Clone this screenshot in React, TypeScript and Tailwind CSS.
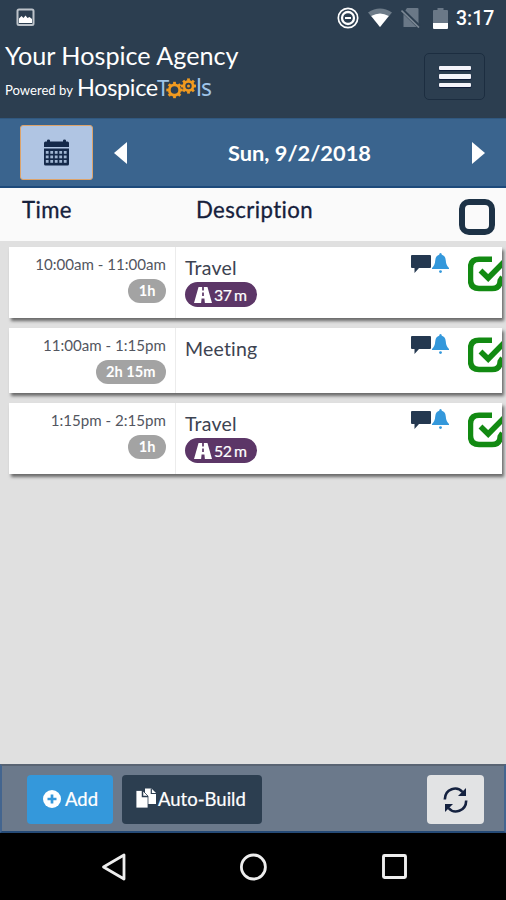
import type { ReactNode } from 'react'

interface Visit {
  time: string
  duration: string
  title: string
  drive?: string
}

const VISITS: Visit[] = [
  { time: '10:00am - 11:00am', duration: '1h', title: 'Travel', drive: '37 m' },
  { time: '11:00am - 1:15pm', duration: '2h 15m', title: 'Meeting' },
  { time: '1:15pm - 2:15pm', duration: '1h', title: 'Travel', drive: '52 m' },
]

function StatusBar() {
  return (
    <div className="flex h-9 items-center pl-4 pr-[10px]">
      <svg className="mt-[-1px]" width="20" height="19" viewBox="0 0 20 19">
        <rect x="1.500" y="1.500" width="16" height="15.500" rx="1.500" fill="none" stroke="#bdc3ca" strokeWidth="2" />
        <path d="M3 15v-4.500l2.500-2.500 2 2 2-2.500 2 2.500 2-1 2.500 2v4z" fill="#fff" />
      </svg>
      <div className="ml-auto flex items-center">
        <svg width="22" height="22" viewBox="0 0 22 22">
          <circle cx="11" cy="11" r="9.700" fill="none" stroke="#fff" strokeWidth="1.700" />
          <circle cx="11" cy="11" r="6" fill="none" stroke="#fff" strokeWidth="2.300" />
          <path d="M8 11h6" stroke="#fff" strokeWidth="2" />
        </svg>
        <svg className="ml-[9px]" width="24" height="20" viewBox="0 0 24 20">
          <path d="M0 4.500Q12-3.500 24 4.500L12 19z" fill="#6d7b88" />
          <path d="M3.200 8Q12 3 20.800 8L12 19z" fill="#fff" />
        </svg>
        <svg className="ml-[9px]" width="20" height="20" viewBox="0 0 20 20">
          <path d="M6 0h10.500q1 0 1 1v18h-15V5z" fill="#6a7887" />
          <path d="M0 1l19 18.500" stroke="#2c3e50" strokeWidth="4" />
          <path d="M.5 2.500l17.500 17" stroke="#7c8894" strokeWidth="1.700" />
        </svg>
        <svg className="ml-[12px]" width="15" height="21" viewBox="0 0 15 21">
          <path d="M4.500 0h6v2H14q1 0 1 1v12H0V3q0-1 1-1h3.500z" fill="#6a7887" />
          <path d="M0 15h15v5q0 1-1 1H1q-1 0-1-1z" fill="#fff" />
        </svg>
        <span className="ml-[8px] mt-[2px] w-[40px] whitespace-nowrap font-['Roboto'] text-[19.500px] font-medium leading-none text-white">3:17</span>
      </div>
    </div>
  )
}

function Gear({ x, y, r }: { x: number; y: number; r: number }) {
  return (
    <g transform={`translate(${x} ${y})`} fill="none" stroke="#f19a1f">
      <circle r={r - 2.2} strokeWidth="2.800" />
      {[0, 45, 90, 135, 180, 225, 270, 315].map((a) => (
        <path key={a} d={`M0 ${-(r - 1.5)}V${-(r + 0.8)}`} strokeWidth="2.800" transform={`rotate(${a})`} />
      ))}
    </g>
  )
}

function Logo() {
  return (
    <div className="flex h-[30px] items-start text-[24px] leading-[30px]">
      <span className="w-[80px] whitespace-nowrap text-[23.500px] tracking-[-0.35px]">Hospice</span>
      <span className="w-[9px] font-['Noto_Sans'] text-[22px] tracking-[-3px] text-[#9fc4e8]">T</span>
      <svg width="30" height="28" viewBox="166 73 30 28">
        <Gear x={174.5} y={91} r={7.4} />
        <Gear x={188.5} y={87} r={6.8} />
        <circle cx="188.500" cy="87" r="1.500" fill="#f19a1f" />
      </svg>
      <span className="font-['Noto_Sans'] text-[23px] tracking-[-1px] text-[#9fc4e8]">ls</span>
    </div>
  )
}

function AppHeader() {
  return (
    <header className="h-[118px] bg-[#2c3e50] text-white">
      <StatusBar />
      <div className="flex justify-between pl-[5px] pr-[21px]">
        <div>
          <h1 className="mt-[4px] whitespace-nowrap text-[25.200px] leading-[30px]">Your Hospice Agency</h1>
          <div className="mt-[2px] flex">
            <span className="w-[72px] whitespace-nowrap pt-[8px] text-[13.100px] leading-[20px]">Powered by</span>
            <Logo />
          </div>
        </div>
        <button className="mt-[17px] flex h-[47px] w-[61px] flex-col items-center justify-center gap-[4px] rounded-[5px] border border-[#1c2d40]">
          {[0, 1, 2].map((i) => (
            <span key={i} className="h-[4.500px] w-[32px] rounded-[1px] bg-[#f4f4fa] shadow-[0_1px_1px_#0c1836]" />
          ))}
        </button>
      </div>
    </header>
  )
}

function CalendarIcon() {
  const cols = [2.5, 7, 11.5, 16, 20.5]
  return (
    <svg width="25" height="27" viewBox="0 0 25 27">
      <path d="M0 8V4q0-1.500 1.500-1.500H3V1.500Q3 .5 4.500.5T6 1.500v1h13v-1Q19 .5 20.500.5T22 1.500v1h1.500Q25 2.500 25 4v4zM0 9.500h25V25q0 1.500-1.500 1.500h-22Q0 26.500 0 25z" fill="#14294a" />
      {[12, 16.5, 21].map((y) =>
        cols.map((x) => <rect key={`${x}-${y}`} x={x - 0.7} y={y} width="2.800" height="2.800" fill="#9fb5d2" />)
      )}
    </svg>
  )
}

function DateBar() {
  return (
    <div className="flex h-[70px] items-center border-b-2 border-t border-b-[#1d4a7b] border-t-[#305880] bg-[#3a648e] pl-[20px] pr-[21px]">
      <button className="flex h-[55px] w-[73px] items-center justify-center rounded-[3px] border-[1.500px] border-[#dda36a] bg-[#b0c5e3]">
        <CalendarIcon />
      </button>
      <svg className="ml-[21px]" width="13" height="22" viewBox="0 0 13 22">
        <path d="M13 0v22L0 11z" fill="#fff" />
      </svg>
      <span className="ml-[101px] whitespace-nowrap text-[21.800px] font-bold leading-none text-white">Sun, 9/2/2018</span>
      <svg className="ml-auto" width="13" height="22" viewBox="0 0 13 22">
        <path d="M0 0v22L13 11z" fill="#fff" />
      </svg>
    </div>
  )
}

function ColumnHeader() {
  return (
    <div className="flex h-[53px] bg-[#fafafa] pl-[22px] pr-[11px] text-[22.200px] leading-[26px] tracking-[0.4px] text-[#16213c] [-webkit-text-stroke:0.3px_#16213c]">
      <span className="mt-[9px] w-[174px]">Time</span>
      <span className="mt-[9px]">Description</span>
      <span className="ml-auto mt-[11px] size-[36px] rounded-[10px] border-[6px] border-[#1d3246]" />
    </div>
  )
}

function Pill({ className, children }: { className: string; children: ReactNode }) {
  return <span className={`flex items-center whitespace-nowrap rounded-full text-white ${className}`}>{children}</span>
}

function RoadIcon() {
  return (
    <svg width="18" height="16" viewBox="0 0 19 16" preserveAspectRatio="none">
      <path d="M4.800 0h9.400L19 16h-7.500l-.5-4.500H8L7.500 16H0z" fill="#fff" />
      <path d="M9.500 0v3.500M9.500 5.500v3.500" stroke="#5c3667" strokeWidth="1.800" />
    </svg>
  )
}

function VisitActions() {
  return (
    <div className="ml-auto flex">
      <svg className="mt-[8px]" width="20" height="19" viewBox="0 0 20 19">
        <path d="M1 0h18Q20 0 20 1v11q0 1-1 1H8l-4.500 5V13H1Q0 13 0 12V1Q0 0 1 0z" fill="#243850" />
      </svg>
      <svg className="ml-[1px] mt-[6px]" width="17" height="20" viewBox="0 0 17 20">
        <path d="M8.500 0q1.300 0 1.300 1.800 3.500.8 3.900 5.200.4 5.500 3.300 8v1H0v-1q2.900-2.500 3.300-8 .4-4.400 3.900-5.200Q7.200 0 8.500 0z" fill="#3498db" />
        <circle cx="8.500" cy="18.600" r="1.400" fill="#3498db" />
      </svg>
      <svg className="ml-[19px] mt-[9px]" width="34" height="36" viewBox="0 0 34 36">
        <path d="M24 3.300H11Q2.500 3.300 2.500 11.800v12q0 8.700 8.500 8.700h13q8 0 8.200-8l2.300-3.500" fill="none" stroke="#128a12" strokeWidth="5.500" />
        <path d="M12.500 14.500l7.700 7.500L36 6" fill="none" stroke="#128a12" strokeWidth="5.500" />
      </svg>
    </div>
  )
}

function VisitCard({ visit }: { visit: Visit }) {
  return (
    <div className={`flex overflow-hidden bg-white shadow-[2px_3px_3px_#6b6b6b] ${visit.drive ? 'h-[71px]' : 'h-[65px]'}`}>
      <div className="flex w-[167px] shrink-0 flex-col items-end border-r border-[#ececec] pr-[9px] pt-[7px]">
        <span className="whitespace-nowrap text-[15.100px] leading-[20px] text-[#53565f]">{visit.time}</span>
        <Pill className="mt-[5px] h-[24px] bg-[#a3a3a3] px-[10.500px] text-[14.600px] font-bold">{visit.duration}</Pill>
      </div>
      <div className="flex flex-col items-start pl-[9px] pt-[9px]">
        <span className="text-[19.500px] leading-[24px] tracking-[0.2px] text-[#3d4351]">{visit.title}</span>
        {visit.drive && (
          <Pill className="mt-[2px] h-[25px] w-[72px] gap-[2px] bg-[#5c3667] pl-[9px] text-[15.800px] tracking-[-0.3px] [word-spacing:-1.5px] [-webkit-text-stroke:0.2px_white]">
            <RoadIcon />
            {visit.drive}
          </Pill>
        )}
      </div>
      <VisitActions />
    </div>
  )
}

function ActionBar() {
  return (
    <div className="flex h-[69px] items-center border-x-2 border-b-2 border-t-2 border-x-[#43658f] border-b-[#254a76] border-t-[#596473] bg-[#6b798b] pl-[25px] pr-[20px] pt-[2px] text-[18.500px] text-white [-webkit-text-stroke:0.2px_white]">
      <button className="flex h-[49px] w-[86px] items-center gap-[4px] rounded-[4px] bg-[#3498db] pl-[16px]">
        <svg className="mt-[-2px]" width="18" height="18" viewBox="0 0 18 18">
          <circle cx="9" cy="9" r="9" fill="#fff" />
          <path d="M9 4.500v9M4.500 9h9" stroke="#3498db" strokeWidth="2.700" />
        </svg>
        Add
      </button>
      <button className="ml-[9px] flex h-[49px] w-[140px] items-center gap-[2px] whitespace-nowrap rounded-[4px] bg-[#2c3e50] pl-[14px]">
        <svg className="mt-[-3px]" width="20" height="20" viewBox="0 0 20 20">
          <path d="M9 .500h6.500L20 5v11H9z" fill="#fff" />
          <path d="M15.300.5v5H20" fill="none" stroke="#2c3e50" strokeWidth="1.200" />
          <path d="M0 2.500h6.500L12 8v12H0z" fill="#fff" stroke="#2c3e50" strokeWidth=".8" />
          <path d="M6.500 2v6.500H12" fill="none" stroke="#2c3e50" strokeWidth="1.500" />
        </svg>
        Auto-Build
      </button>
      <button className="ml-auto flex h-[49px] w-[57px] items-center justify-center rounded-[4px] bg-[#e2e3e4]">
        <svg width="25" height="26" viewBox="0 0 25 26">
          <path d="M1.800 12.500C2 1.500 14-1.500 19.500 5M23.200 13.500C23 24.500 11 27.500 5.500 21" fill="none" stroke="#14213f" strokeWidth="2.600" />
          <path d="M23 1v8h-8zM2 25v-8h8z" fill="#14213f" />
        </svg>
      </button>
    </div>
  )
}

function NavBar() {
  return (
    <nav className="flex h-[67px] items-center bg-black">
      <svg className="ml-[101px]" width="26" height="28" viewBox="0 0 26 28">
        <path d="M23 2v24L2.500 14z" fill="none" stroke="#eee" strokeWidth="2.800" strokeLinejoin="round" />
      </svg>
      <svg className="ml-[112px]" width="28" height="28" viewBox="0 0 28 28">
        <circle cx="14.400" cy="14" r="12" fill="none" stroke="#eee" strokeWidth="2.800" />
      </svg>
      <svg className="ml-[115px]" width="25" height="25" viewBox="0 0 25 25">
        <rect x="1.500" y="1.500" width="22" height="22" rx="1" fill="none" stroke="#eee" strokeWidth="2.900" />
      </svg>
    </nav>
  )
}

export default function App() {
  return (
    <div className="flex h-[900px] w-[506px] flex-col overflow-hidden bg-[#e0e0e0] font-['Lato',sans-serif] [font-variant-ligatures:none]">
      <AppHeader />
      <DateBar />
      <ColumnHeader />
      <main className="flex flex-1 flex-col gap-[10px] pl-[9px] pr-[4px] pt-[6px]">
        {VISITS.map((visit) => (
          <VisitCard key={visit.time} visit={visit} />
        ))}
      </main>
      <ActionBar />
      <NavBar />
    </div>
  )
}
